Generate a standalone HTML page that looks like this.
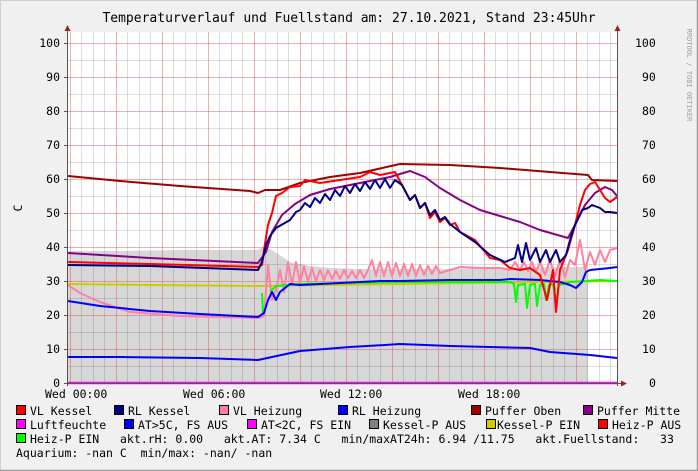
<!DOCTYPE html>
<html><head><style>
body{margin:0;width:698px;height:471px;overflow:hidden;background:#f0f0f0;}
svg{display:block}
text{font-family:"DejaVu Sans Mono","Liberation Mono",monospace;fill:#000}
</style></head><body>
<svg width="698" height="471" xmlns="http://www.w3.org/2000/svg">
<rect x="0" y="0" width="698" height="471" fill="#f0f0f0"/>
<path d="M0.5 470.5V0.5H697.5" stroke="#cfcfcf" fill="none"/>
<path d="M0 470.5H697.5V0" stroke="#9d9d9d" fill="none" stroke-width="1.5"/>
<rect x="68" y="32" width="550" height="351" fill="#fff"/>
<path fill="#d7d7d7" d="M68 383V251L120 251L180 250L258 250L262 247L268 248L275 252L290 262L310 266L330 268L360 269L400 269L450 269L500 268L560 267L588 267L588 383Z"/>
<g stroke="#ffffff" stroke-width="1.5"><line x1="590" y1="270" x2="590" y2="383"/><line x1="606" y1="290" x2="606" y2="383"/><line x1="611" y1="290" x2="611" y2="383"/></g>
<g stroke="#000" stroke-opacity="0.13" stroke-width="1">
<path d="M68 366.5H618M68 332.5H618M68 298.5H618M68 264.5H618M68 230.5H618M68 196.5H618M68 162.5H618M68 128.5H618M68 94.5H618M68 60.5H618"/>
<path d="M81.5 32V383M93.5 32V383M104.5 32V383M127.5 32V383M139.5 32V383M150.5 32V383M173.5 32V383M185.5 32V383M196.5 32V383M219.5 32V383M231.5 32V383M242.5 32V383M265.5 32V383M277.5 32V383M288.5 32V383M311.5 32V383M323.5 32V383M334.5 32V383M357.5 32V383M369.5 32V383M380.5 32V383M403.5 32V383M415.5 32V383M426.5 32V383M449.5 32V383M461.5 32V383M472.5 32V383M495.5 32V383M507.5 32V383M518.5 32V383M541.5 32V383M553.5 32V383M564.5 32V383M587.5 32V383M599.5 32V383M610.5 32V383"/>
</g>
<g stroke="#e05050" stroke-opacity="0.45" stroke-width="1">
<path d="M68 349.5H618M68 315.5H618M68 281.5H618M68 247.5H618M68 213.5H618M68 179.5H618M68 145.5H618M68 111.5H618M68 77.5H618M68 43.5H618"/>
<path d="M70.5 32V383M116.5 32V383M162.5 32V383M208.5 32V383M254.5 32V383M300.5 32V383M346.5 32V383M392.5 32V383M438.5 32V383M484.5 32V383M530.5 32V383M576.5 32V383"/>
</g>
<g fill="none" stroke-width="2" stroke-linejoin="round">
<polyline stroke="#0000ff" points="68,357 120,357 200,358 258,360 300,351 350,347 385,345 400,344 450,346 530,348 550,352 590,355 617,358"/>
<polyline stroke="#cccc00" points="68,284 150,285 258,286 400,284 617,281"/>
<polyline stroke="#ff80a0" points="68,285 80,293 100,302 130,312 180,316 258,318 264,316 268,265 272,300 276,290 280,270 284,292 288,262 292,285 296,262 300,283 304,266 308,282 312,268 316,281 320,270 324,280 328,270 332,279 336,271 340,279 344,270 348,278 352,271 356,278 360,270 364,278 368,270 372,260 376,276 380,262 384,276 388,262 392,276 396,263 400,276 404,264 408,276 412,264 416,276 420,265 424,275 428,266 432,274 436,266 440,273 460,267 480,268 500,268 510,270 515,262 520,270 524,262 528,271 532,262 536,272 540,262 545,275 550,260 555,277 560,260 565,277 570,260 575,265 580,240 585,270 590,252 595,265 600,250 605,262 610,250 617,248"/>
<polyline stroke="#00ff00" points="262,293 263,313"/>
<polyline stroke="#00ff00" points="270,292 276,286 300,284 400,282 510,282 514,284 516,302 518,285 525,284 527,308 530,285 535,284 537,306 540,285 544,284 546,300 549,285 553,284 556,303 559,285 570,282 600,280 617,281"/>
<polyline stroke="#0000ff" points="68,301 100,306 150,311 200,314 258,317 264,313 268,300 272,292 276,300 280,292 290,284 300,285 340,283 380,281 400,281 450,280 500,280 510,279 540,280 560,282 570,285 576,288 582,282 586,272 590,270 600,269 610,268 617,267"/>
<polyline stroke="#a00000" points="68,176 120,181 180,186 250,191 258,193 265,190 280,190 300,183 330,177 360,173 400,164 450,165 500,168 550,172 588,175 592,180 617,181"/>
<polyline stroke="#880088" points="68,253 150,258 258,263 266,252 272,232 282,215 295,204 310,195 330,189 360,183 390,177 410,171 425,177 440,188 460,200 480,210 500,216 520,222 540,230 568,238 575,225 585,205 595,193 605,187 612,190 617,196"/>
<polyline stroke="#ff0000" points="68,262 150,264 258,267 262,265 264,250 268,225 272,213 276,196 282,193 290,187 300,186 305,180 320,183 340,180 360,177 370,172 380,175 395,172 402,185 410,200 415,195 420,208 425,203 430,218 435,212 440,222 445,218 450,225 455,223 460,232 475,240 490,258 500,260 510,268 520,270 530,268 540,275 547,300 553,270 556,312 560,270 568,250 575,225 580,205 585,190 590,184 595,182 600,190 605,198 610,202 617,197"/>
<polyline stroke="#000080" points="68,265 150,266 258,270 262,262 266,245 270,236 276,228 290,220 296,212 300,210 305,203 310,207 315,198 320,203 325,194 330,200 335,190 340,196 345,186 350,193 355,184 360,191 365,182 370,189 375,180 380,188 385,179 390,188 395,180 402,185 410,200 415,195 420,208 425,203 430,215 435,210 440,220 445,217 450,224 460,232 475,242 490,255 505,262 515,258 518,245 522,262 526,243 530,260 536,248 540,262 546,250 550,262 556,250 560,262 566,255 570,240 575,225 582,210 588,208 592,205 600,208 605,212 610,212 617,213"/>
<line x1="68" y1="383" x2="617" y2="383" stroke="#ff00ff" stroke-width="2.5"/>
</g>
<g stroke="#555" stroke-width="1" fill="none">
<line x1="67.5" y1="30" x2="67.5" y2="386"/>
<line x1="617.5" y1="30" x2="617.5" y2="386"/>
<line x1="64" y1="383.5" x2="622" y2="383.5"/>
<path d="M64 349.5h4M64 315.5h4M64 281.5h4M64 247.5h4M64 213.5h4M64 179.5h4M64 145.5h4M64 111.5h4M64 77.5h4M64 43.5h4"/>
</g>
<g fill="#a02020"><path d="M64.5 31L67.5 25L70.5 31Z"/><path d="M614.5 31L617.5 25L620.5 31Z"/><path d="M621 380.5L627 383.5L621 386.5Z"/></g>
<g font-size="11.5" text-anchor="end">
<text x="60" y="387">0</text><text x="60" y="353">10</text><text x="60" y="319">20</text><text x="60" y="285">30</text><text x="60" y="251">40</text><text x="60" y="217">50</text><text x="60" y="183">60</text><text x="60" y="149">70</text><text x="60" y="115">80</text><text x="60" y="81">90</text><text x="60" y="47">100</text>
</g>
<g font-size="11.5">
<text x="649" y="387">0</text><text x="642" y="353">10</text><text x="642" y="319">20</text><text x="642" y="285">30</text><text x="642" y="251">40</text><text x="642" y="217">50</text><text x="642" y="183">60</text><text x="642" y="149">70</text><text x="642" y="115">80</text><text x="642" y="81">90</text><text x="635" y="47">100</text>
</g>
<text x="18" y="212" font-size="11.5" transform="rotate(-90 18 208)" text-anchor="middle">C</text>
<text x="687" y="75" font-size="7" style="fill:#a0a0a0" transform="rotate(90 687 75)" text-anchor="middle">RRDTOOL / TOBI OETIKER</text>
<text x="349" y="22" font-size="13" text-anchor="middle">Temperaturverlauf und Fuellstand am: 27.10.2021, Stand 23:45Uhr</text>
<g font-size="11.5">
<text x="45" y="398">Wed 00:00</text><text x="183" y="398">Wed 06:00</text><text x="320" y="398">Wed 12:00</text><text x="458" y="398">Wed 18:00</text>
</g>
<g stroke="#000" stroke-width="1">
<rect x="16.5" y="405.5" width="9" height="9" fill="#ff0000"/>
<rect x="114.5" y="405.5" width="9" height="9" fill="#000080"/>
<rect x="219.5" y="405.5" width="9" height="9" fill="#ff80a0"/>
<rect x="338.5" y="405.5" width="9" height="9" fill="#0000ff"/>
<rect x="471.5" y="405.5" width="9" height="9" fill="#a00000"/>
<rect x="583.5" y="405.5" width="9" height="9" fill="#880088"/>
<rect x="16.5" y="419.5" width="9" height="9" fill="#ff00ff"/>
<rect x="124.5" y="419.5" width="9" height="9" fill="#0000ff"/>
<rect x="247.5" y="419.5" width="9" height="9" fill="#ff00ff"/>
<rect x="369.5" y="419.5" width="9" height="9" fill="#808080"/>
<rect x="486.5" y="419.5" width="9" height="9" fill="#cccc00"/>
<rect x="598.5" y="419.5" width="9" height="9" fill="#ff0000"/>
<rect x="16.5" y="433.5" width="9" height="9" fill="#00ff00"/>
</g>
<g font-size="11.5">
<text x="30" y="415">VL Kessel</text>
<text x="128" y="415">RL Kessel</text>
<text x="233" y="415">VL Heizung</text>
<text x="352" y="415">RL Heizung</text>
<text x="485" y="415">Puffer Oben</text>
<text x="597" y="415">Puffer Mitte</text>
<text x="30" y="429">Luftfeuchte</text>
<text x="138" y="429">AT&gt;5C, FS AUS</text>
<text x="261" y="429">AT&lt;2C, FS EIN</text>
<text x="383" y="429">Kessel-P AUS</text>
<text x="497" y="429">Kessel-P EIN</text>
<text x="612" y="429">Heiz-P AUS</text>
<text x="30" y="443" xml:space="preserve">Heiz-P EIN   akt.rH: 0.00   akt.AT: 7.34 C   min/maxAT24h: 6.94 /11.75   akt.Fuellstand:   33</text>
<text x="16" y="457" xml:space="preserve">Aquarium: -nan C  min/max: -nan/ -nan</text>
</g>
</svg>
</body></html>
